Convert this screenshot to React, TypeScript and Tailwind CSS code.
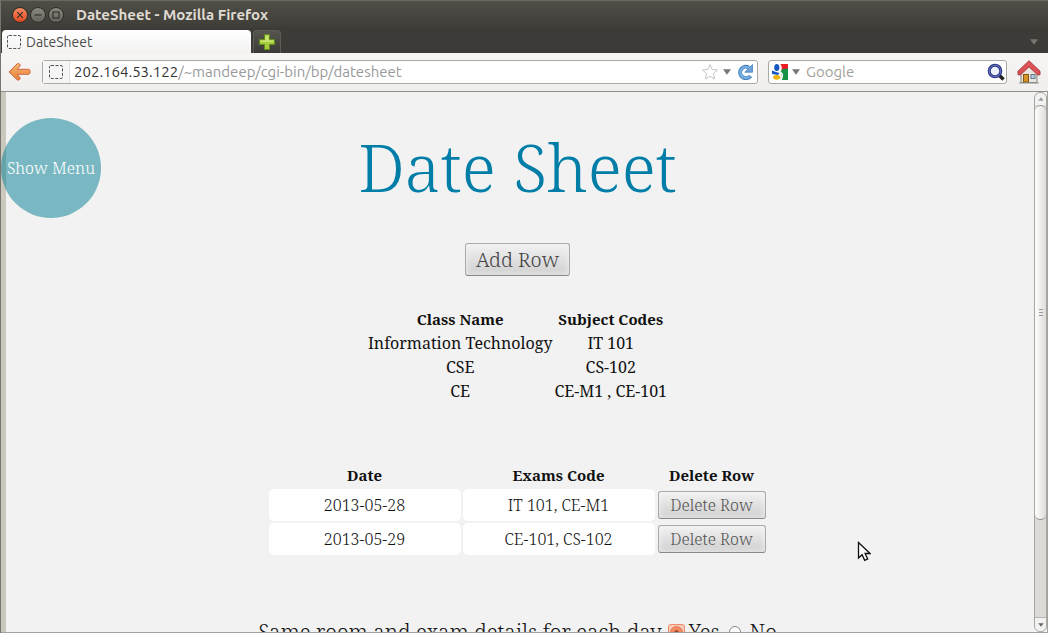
import { useState } from 'react';

const classes = [
  { name: 'Information Technology', codes: 'IT 101' },
  { name: 'CSE', codes: 'CS-102' },
  { name: 'CE', codes: 'CE-M1 , CE-101' },
];

const initialRows = [
  { id: 1, date: '2013-05-28', codes: 'IT 101, CE-M1' },
  { id: 2, date: '2013-05-29', codes: 'CE-101, CS-102' },
];

const pageButton =
  'rounded-[3px] border border-[#aaa] border-b-[#888] bg-linear-to-b from-[#f2f2f2] to-[#cfcfcf] font-light shadow-[inset_0_0_6px_#f2f2f2]';

function WindowButton({ label, close, children }: { label: string; close?: boolean; children: React.ReactNode }) {
  return (
    <button
      aria-label={label}
      className={
        close
          ? 'flex size-4 items-center justify-center rounded-full border border-[#2f2e2a] bg-linear-to-b from-[#f58a62] to-[#e2461b]'
          : 'flex size-4 items-center justify-center rounded-full border border-[#2f2e2a] bg-linear-to-b from-[#8a8880] to-[#65635b]'
      }
    >
      <svg viewBox="0 0 14 14" className="size-3.5 shrink-0" fill="none" stroke="#33312c" strokeWidth="1.2">
        {children}
      </svg>
    </button>
  );
}

function PagePlaceholder() {
  return (
    <svg viewBox="0 0 16 16" className="size-4 shrink-0" fill="none" stroke="#555" strokeWidth="1">
      <rect x="1.5" y="1.5" width="13" height="13" rx="1.5" strokeDasharray="3 1.5" />
    </svg>
  );
}

function Caret({ className }: { className: string }) {
  return (
    <svg viewBox="0 0 8 6" className={className}>
      <path d="M0 .3h8L4 5.700z" fill="currentColor" />
    </svg>
  );
}

function TitleBar() {
  return (
    <header className="flex h-7 shrink-0 items-center border-t border-[#6a6862] bg-linear-to-b from-[#504e47] to-[#3e3d38] pl-[11px]">
      <div className="flex gap-0.5">
        <WindowButton label="Close" close>
          <path d="M4.200 4.200l5.600 5.600M9.800 4.200l-5.600 5.600" />
        </WindowButton>
        <WindowButton label="Minimize">
          <path d="M3.500 7h7" />
        </WindowButton>
        <WindowButton label="Maximize">
          <rect x="4" y="4" width="6" height="6" />
        </WindowButton>
      </div>
      <h1 className="ml-3 text-[15px] leading-5 font-bold text-[#dfdbd2]">DateSheet - Mozilla Firefox</h1>
    </header>
  );
}

function TabBar() {
  return (
    <div className="flex h-[25px] shrink-0 items-end bg-[#3c3b37] pl-px">
      <div className="flex h-[23px] w-[249px] items-center gap-1 rounded-t bg-linear-to-b from-white to-[#f3f2f1] pl-1">
        <PagePlaceholder />
        <span className="text-[14px] leading-5 text-[#4c4c4c]">DateSheet</span>
      </div>
      <button
        aria-label="New tab"
        className="ml-0.5 flex h-[23px] w-7 items-center justify-center rounded-t border border-b-0 border-[#5d5c57] bg-linear-to-b from-[#55544e] to-[#3a3935]"
      >
        <svg viewBox="0 0 16 16" className="size-4">
          <path d="M5.500 .5h5v5h5v5h-5v5h-5v-5h-5v-5h5z" fill="#a5cc3a" stroke="#608a1c" />
          <path d="M6.500 6.500v-5h3v5h5v1.500h-13V6.500z" fill="#cbe575" />
        </svg>
      </button>
      <button aria-label="List all tabs" className="mr-2.5 mb-2 ml-auto text-[#77756f]">
        <Caret className="h-1.5 w-2" />
      </button>
    </div>
  );
}

function Toolbar() {
  return (
    <nav className="flex h-[39px] shrink-0 items-center border-b border-[#8f8e89] bg-linear-to-b from-[#f6f5f4] to-[#f0efee] px-[7px]">
      <button aria-label="Back" className="mr-2.5">
        <svg viewBox="0 0 24 20" className="h-5 w-6">
          <defs>
            <linearGradient id="back" x1="0" y1="0" x2="0" y2="1">
              <stop offset="0" stopColor="#fbb76e" />
              <stop offset="1" stopColor="#e2803a" />
            </linearGradient>
          </defs>
          <path
            d="M1 10l8.200-8.200c1.300-1 3.600.5 2.800 2.200L9.200 7.300h11.500c2 0 2 5 0 5H9.200l2.800 3.300c.8 1.700-1.500 3.400-2.800 2.200z"
            fill="url(#back)"
            stroke="#cf6540"
            strokeWidth="1"
            strokeLinejoin="round"
          />
        </svg>
      </button>
      <div className="flex h-6 min-w-0 flex-1 items-center rounded-[3px] border border-[#aaa9a5] bg-white">
        <div className="flex h-full w-[27px] shrink-0 items-center justify-center border-r border-[#ddd] bg-[#f6f6f6]">
          <PagePlaceholder />
        </div>
        <a href="#top" className="min-w-0 flex-1 truncate pl-1 text-[15px] leading-5 text-[#999]">
          <span className="text-[#333]">202.164.53.122</span>/~mandeep/cgi-bin/bp/datesheet
        </a>
        <button aria-label="Bookmark this page">
          <svg viewBox="0 0 18 18" className="size-[18px]" fill="#fff" stroke="#c6c6c6">
            <path d="M9 1.500l2.100 5 5.400.500-4.100 3.600 1.300 5.400L9 13.200 4.300 16l1.300-5.400L1.500 7l5.400-.500z" strokeLinejoin="round" />
          </svg>
        </button>
        <button aria-label="History" className="ml-1 text-[#777]">
          <Caret className="h-1.5 w-2" />
        </button>
        <button aria-label="Reload" className="mr-1 ml-1.5">
          <svg viewBox="0 0 16 16" className="size-4">
            <path d="M13.500 11.800A5.700 5.700 0 1 1 11.800 3.600" fill="none" stroke="#4682bd" strokeWidth="4" />
            <path d="M15.500 .5v7.700H7.800z" fill="#6ba3d9" stroke="#4682bd" strokeWidth=".8" />
            <path d="M13 11.800A5.400 5.400 0 1 1 12 4.200" fill="none" stroke="#77ade0" strokeWidth="2.400" />
          </svg>
        </button>
      </div>
      <form className="ml-2.5 flex h-6 w-[239px] items-center rounded-[3px] border border-[#aaa9a5] bg-white pr-px pl-[3px]">
        <button type="button" aria-label="Choose search engine" className="flex items-center gap-1 text-[#777]">
          <svg viewBox="0 0 16 16" className="size-4">
            <path d="M8 0h8v6H9.500z" fill="#ee1c25" />
            <path d="M8 7.500L10.500 5.200 16 4.500V16H8.500L10 12z" fill="#159447" />
            <path d="M0 6.500l4 1.500 3.500 1L6 11 0 10z" fill="#1757c2" />
            <ellipse cx="4.800" cy="3.600" rx="2.600" ry="3.500" fill="#1757c2" />
            <path d="M7.300 0C10 2.500 9.500 5 7.500 7l2.800 3.200c.6 1.800 0 3.600-1.300 5.800" fill="none" stroke="#fff" strokeWidth="1.300" />
            <ellipse cx="4.700" cy="13.300" rx="3.600" ry="2.400" fill="#f5b50f" />
          </svg>
          <Caret className="h-1.5 w-2" />
        </button>
        <input
          type="search"
          aria-label="Search"
          placeholder="Google"
          className="ml-1.5 min-w-0 flex-1 bg-transparent text-[15px] leading-5 outline-none placeholder:text-[#a39f9b]"
        />
        <button type="button" aria-label="Search the web">
          <svg viewBox="0 0 18 18" className="size-[18px]">
            <path d="M12 12l4.500 4.500" stroke="#222" strokeWidth="3.600" />
            <circle cx="8" cy="8" r="5.800" fill="#edf1fa" stroke="#2c3785" strokeWidth="3" />
            <circle cx="8" cy="8" r="5.800" fill="none" stroke="#6875c0" strokeWidth="1" />
          </svg>
        </button>
      </form>
      <button aria-label="Home" className="ml-2.5">
        <svg viewBox="0 0 24 24" className="size-6">
          <path d="M4 12l8-8 8 8v10.500H4z" fill="#e6e5df" stroke="#85857d" />
          <path d="M12 .8L1 11.200v3.600h2.500L12 6.800l8.500 8H23v-3.600z" fill="#dc5355" stroke="#a92e32" strokeWidth=".9" strokeLinejoin="round" />
          <rect x="6.500" y="14.500" width="5" height="7.500" fill="#d5932a" stroke="#8a5710" />
          <rect x="14" y="14.500" width="4" height="4" fill="#b5cce0" stroke="#6c7885" />
          <path d="M2 23h20" stroke="#8d8d87" />
        </svg>
      </button>
    </nav>
  );
}

function Scrollbar() {
  return (
    <div className="flex w-[13px] shrink-0 flex-col rounded-md border border-[#a9a6a2] bg-[#dcd9d7]">
      <div className="flex h-3 shrink-0 items-center justify-center rounded-t-md bg-[#f3f2f2] text-[#999]">
        <Caret className="h-1 w-1.5 rotate-180" />
      </div>
      <div className="flex flex-[415] flex-col items-center justify-center gap-0.5 rounded-md border-y border-[#96938f] bg-linear-to-r from-white to-[#dedcda]">
        <span className="h-px w-1 bg-[#999]" />
        <span className="h-px w-1 bg-[#999]" />
        <span className="h-px w-1 bg-[#999]" />
      </div>
      <div className="flex-[97]" />
      <div className="flex h-3.5 shrink-0 items-center justify-center rounded-b-md border-t border-[#b6b3b0] bg-[#f3f2f2] text-[#666]">
        <Caret className="h-1 w-1.5" />
      </div>
    </div>
  );
}

export default function App() {
  const [rows, setRows] = useState(initialRows);
  const addRow = () => setRows([...rows, { id: Date.now(), date: '', codes: '' }]);
  const deleteRow = (id: number) => setRows(rows.filter((row) => row.id !== id));

  return (
    <div className="flex h-screen flex-col overflow-hidden border-l border-[#77756f] font-[Ubuntu,'Noto_Sans',sans-serif]">
      <TitleBar />
      <TabBar />
      <Toolbar />
      <div className="relative flex min-h-0 flex-1 border-r border-b border-[#a5a39d] bg-[#f2f2f2]">
        <main className="min-w-0 flex-1 overflow-hidden border-l-[5px] border-[#cbc9bd] pr-[5px] text-center font-['Roboto_Slab','Noto_Serif',serif] text-base leading-6 text-[#111]">
          <h2 className="mt-[34px] text-[66px] leading-[80px] font-light text-[#007ea7]">Date Sheet</h2>
          <button onClick={addRow} className={`${pageButton} mt-[37px] h-[33px] px-2.5 text-[20px] leading-6 text-[#444]`}>
            Add Row
          </button>
          <table className="mx-auto mt-[31px] border-separate border-spacing-x-0.5 border-spacing-y-0">
            <thead>
              <tr>
                <th className="p-0 text-[15px] leading-6">Class Name</th>
                <th className="p-0 text-[15px] leading-6">Subject Codes</th>
              </tr>
            </thead>
            <tbody>
              {classes.map((item) => (
                <tr key={item.name}>
                  <td className="p-0">{item.name}</td>
                  <td className="p-0">{item.codes}</td>
                </tr>
              ))}
            </tbody>
          </table>
          <table className="mx-auto mt-[59px] border-separate border-spacing-0.5">
            <thead>
              <tr>
                <th className="p-0 text-[15px] leading-[23px]">Date</th>
                <th className="p-0 text-[15px] leading-[23px]">Exams Code</th>
                <th className="p-0 text-[15px] leading-[23px]">Delete Row</th>
              </tr>
            </thead>
            <tbody>
              {rows.map((row) => (
                <tr key={row.id}>
                  <td className="p-0">
                    <input
                      aria-label="Date"
                      defaultValue={row.date}
                      className="block h-8 w-48 rounded-[5px] bg-white text-center font-light outline-none"
                    />
                  </td>
                  <td className="p-0">
                    <input
                      aria-label="Exams Code"
                      defaultValue={row.codes}
                      className="block h-8 w-48 rounded-[5px] bg-white text-center font-light outline-none"
                    />
                  </td>
                  <td className="px-px py-0">
                    <button onClick={() => deleteRow(row.id)} className={`${pageButton} block h-7 w-[108px] leading-6 text-[#555]`}>
                      Delete Row
                    </button>
                  </td>
                </tr>
              ))}
            </tbody>
          </table>
          <fieldset className="mt-[59px] flex items-center justify-center text-[21px] leading-8 font-light whitespace-nowrap">
            <span>Same room and exam details for each day</span>
            <label className="ml-1.5 flex items-center gap-1">
              <span className="flex size-[17px] items-center justify-center rounded-[3px] border border-[#f08a64] bg-[#f9cdbd]">
                <input
                  type="radio"
                  name="same"
                  defaultChecked
                  className="size-[13px] appearance-none rounded-full border border-[#dd7750] bg-white checked:bg-radial checked:from-[#9d4a2c] checked:from-25% checked:to-[#f58a62] checked:to-35%"
                />
              </span>
              Yes
            </label>
            <label className="ml-2.5 flex items-center gap-2">
              <input
                type="radio"
                name="same"
                className="size-3 appearance-none rounded-full border border-[#888] bg-white checked:bg-[#f08a64]"
              />
              No
            </label>
          </fieldset>
        </main>
        <button className="absolute top-[26px] left-0 size-[100px] rounded-full bg-[#007e92]/50 font-['Roboto_Slab','Noto_Serif',serif] text-base font-light whitespace-nowrap text-white">
          Show Menu
        </button>
        <Scrollbar />
        <svg viewBox="0 0 14 21" className="absolute top-[449px] left-[856px] h-[21px] w-3.5">
          <path d="M1.500 1.500v15.500l3.600-3.300 2.600 5.600 3-1.400-2.600-5.400h4.900z" fill="#fff" stroke="#111" strokeWidth="1.300" />
        </svg>
      </div>
    </div>
  );
}
